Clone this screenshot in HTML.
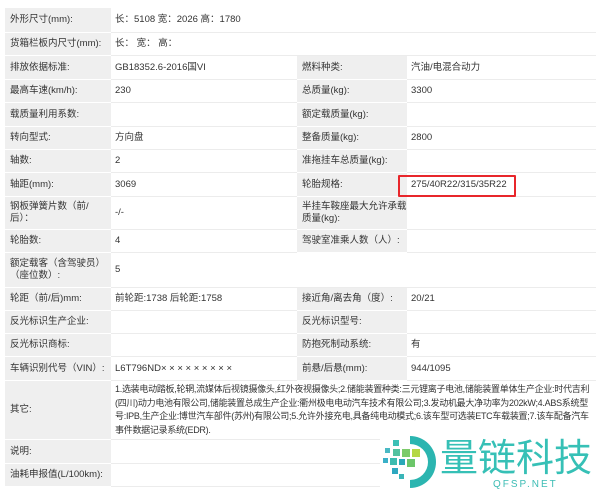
<!DOCTYPE html>
<html><head><meta charset="utf-8"><style>
body{margin:0;width:600px;height:492px;background:#fff;position:relative;overflow:hidden;font-family:"Liberation Sans","Noto Sans CJK SC",sans-serif;font-size:9.5px;color:#333}
.c{position:absolute;box-sizing:border-box;display:flex;align-items:center;line-height:12px}
.l{background:#efefef;padding-left:5px;border-bottom:1px solid #fff}
.v{background:#fff;padding-left:4px;border-bottom:1px solid #ececec}
.o{white-space:nowrap;font-size:9px;letter-spacing:-0.28px}
</style></head><body>
<div id="t"></div>
<script>
var rows=[
[8,33,"外形尺寸(mm):","长：5108 宽：2026 高：1780",null,null],
[33,56,"货箱栏板内尺寸(mm):","长：&nbsp;宽：&nbsp;高：",null,null],
[56,80,"排放依据标准:","GB18352.6-2016国VI","燃料种类:","汽油/电混合动力"],
[80,103,"最高车速(km/h):","230","总质量(kg):","3300"],
[103,127,"载质量利用系数:","","额定载质量(kg):",""],
[127,150,"转向型式:","方向盘","整备质量(kg):","2800"],
[150,173,"轴数:","2","准拖挂车总质量(kg):",""],
[173,197,"轴距(mm):","3069","轮胎规格:","275/40R22/315/35R22"],
[197,230,"钢板弹簧片数（前/<br>后）：","-/-","半挂车鞍座最大允许承载<br>质量(kg):",""],
[230,253,"轮胎数:","4","驾驶室准乘人数（人）:",""],
[253,288,"额定载客（含驾驶员）<br>（座位数）:","5",null,null],
[288,311,"轮距（前/后)mm:","前轮距:1738 后轮距:1758","接近角/离去角（度）:","20/21"],
[311,334,"反光标识生产企业:","","反光标识型号:",""],
[334,357,"反光标识商标:","","防抱死制动系统:","有"],
[357,381,"车辆识别代号（VIN）:","L6T796ND× × × × × × × × ×","前悬/后悬(mm):","944/1095"],
[381,440,"其它:","<div class='o'>1.选装电动踏板,轮辋,流媒体后视镜摄像头,红外夜视摄像头;2.储能装置种类:三元锂离子电池,储能装置单体生产企业:时代吉利<br>(四川)动力电池有限公司,储能装置总成生产企业:衢州极电电动汽车技术有限公司;3.发动机最大净功率为202kW;4.ABS系统型<br>号:IPB,生产企业:博世汽车部件(苏州)有限公司;5.允许外接充电,具备纯电动模式;6.该车型可选装ETC车载装置;7.该车配备汽车<br>事件数据记录系统(EDR).</div>",null,null],
[440,464,"说明:","",null,null],
[464,487,"油耗申报值(L/100km):","",null,null]];
var h="";
rows.forEach(function(r){var y=r[0],hh=r[1]-r[0];
h+='<div class="c l" style="left:5px;top:'+y+'px;width:106px;height:'+hh+'px">'+r[2]+'</div>';
if(r[4]===null){h+='<div class="c v" style="left:111px;top:'+y+'px;width:485px;height:'+hh+'px;padding-right:2px;line-height:13.5px;overflow:hidden">'+r[3]+'</div>';}
else{h+='<div class="c v" style="left:111px;top:'+y+'px;width:186px;height:'+hh+'px">'+r[3]+'</div>';
h+='<div class="c l" style="left:297px;top:'+y+'px;width:110px;height:'+hh+'px">'+r[4]+'</div>';
h+='<div class="c v" style="left:407px;top:'+y+'px;width:189px;height:'+hh+'px">'+r[5]+'</div>';}
});
document.getElementById("t").innerHTML=h;
</script>
<div style="position:absolute;left:398px;top:175px;width:118px;height:22px;border:2px solid #e8262b;box-sizing:border-box;border-radius:1px"></div>
<div style="position:absolute;left:380px;top:432px;width:220px;height:60px;background:#fff"></div>
<svg style="position:absolute;left:380px;top:432px" width="60" height="60" viewBox="0 0 60 60">
<path d="M30 4 A24 24 0 0 1 30 56 L30 48 A16 16 0 0 0 30 12 Z" fill="#2bb5b0"/>
<rect x="13" y="8" width="6" height="6" fill="#3cc0b6"/>
<rect x="5" y="16" width="5" height="5" fill="#4ab9c4"/>
<rect x="13" y="17" width="7" height="7" fill="#52c2a0"/>
<rect x="22" y="17" width="8" height="8" fill="#7ccb6a"/>
<rect x="32" y="17" width="8" height="8" fill="#b4d845"/>
<rect x="3" y="26" width="5" height="5" fill="#3ab0c8"/>
<rect x="10" y="26" width="7" height="7" fill="#3cbcb0"/>
<rect x="19" y="27" width="6" height="6" fill="#2aa8b8"/>
<rect x="27" y="27" width="8" height="8" fill="#6cc66a"/>
<rect x="12" y="36" width="6" height="6" fill="#2ea8c0"/>
<rect x="19" y="42" width="5" height="5" fill="#3ab5b8"/>
</svg>
<div style="position:absolute;left:440px;top:434px;font-size:38px;line-height:42px;color:#36c0b6;white-space:nowrap;font-family:'Noto Sans CJK SC',sans-serif">量链科技</div>
<div style="position:absolute;left:493px;top:479px;font-size:10px;line-height:11px;color:#3cbcb4;letter-spacing:2px;white-space:nowrap">QFSP.NET</div>
</body></html>
